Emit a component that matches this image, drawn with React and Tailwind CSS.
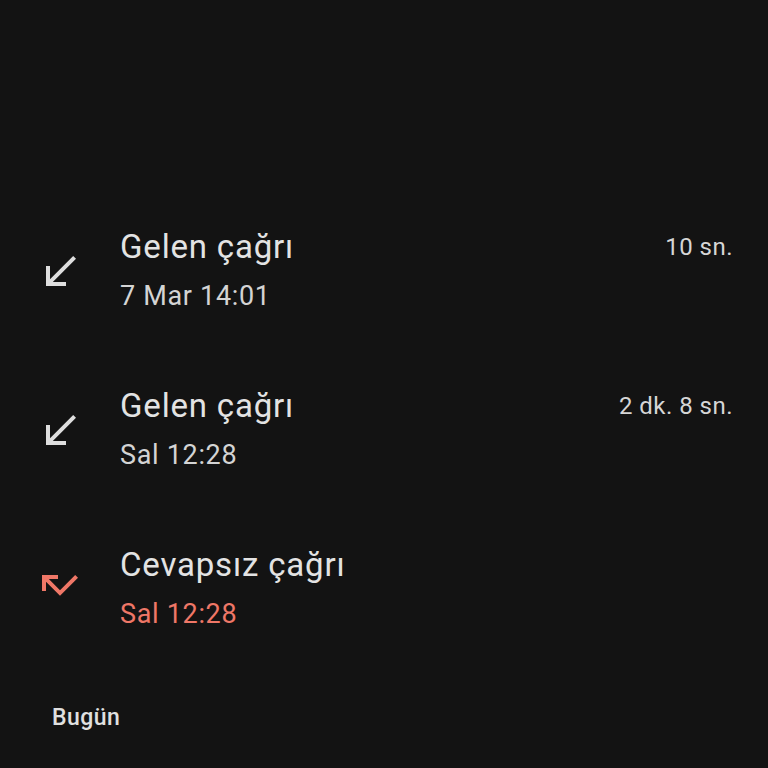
import React from "react";

const IncomingIcon = () => (
  <svg viewBox="0 0 24 24" width="48" height="48" fill="#dedede">
    <path d="M20 5.41L18.59 4 7 15.59V9H5v10h10v-2H8.41z" />
  </svg>
);

const MissedIcon = () => (
  <svg viewBox="0 0 24 24" width="48" height="48" fill="#ef7767">
    <path d="M19.59 7L12 14.59 6.41 9H11V7H3v8h2v-4.59l7 7 9-9z" />
  </svg>
);

const calls = [
  { type: "in", title: "Gelen çağrı", time: "7 Mar 14:01", duration: "10 sn." },
  { type: "in", title: "Gelen çağrı", time: "Sal 12:28", duration: "2 dk. 8 sn." },
  { type: "missed", title: "Cevapsız çağrı", time: "Sal 12:28", duration: null },
];

export default function App() {
  return (
    <div
      className="min-h-screen w-full bg-[#131313] pt-[227px] text-[#e2e2e2]"
      style={{ fontFamily: "Roboto, 'Noto Sans', sans-serif" }}
    >
      <div className="flex flex-col gap-[70px]">
        {calls.map((c, i) => (
          <div key={i} className="flex items-center pr-[35px]">
            <div className="flex w-[120px] items-center pl-[36px]">
              {c.type === "missed" ? (
                <div className="-mt-[10px]">
                  <MissedIcon />
                </div>
              ) : (
                <IncomingIcon />
              )}
            </div>
            <div className="flex flex-1 flex-col gap-[9px]">
              <div className="flex items-center justify-between">
                <span className="text-[33px] leading-[40px] tracking-[0.025em] text-[#e3e3e3]">
                  {c.title}
                </span>
                {c.duration && (
                  <span className="text-[24px] leading-[40px] tracking-[0.02em] text-[#d6d6d6]">
                    {c.duration}
                  </span>
                )}
              </div>
              <span
                className={
                  c.type === "missed"
                    ? "text-[27px] leading-[40px] tracking-[0.025em] text-[#ef7767]"
                    : "text-[27px] leading-[40px] tracking-[0.025em] text-[#d4d4d4]"
                }
              >
                {c.time}
              </span>
            </div>
          </div>
        ))}
      </div>
      <div className="mt-[68px] pl-[52px] text-[23px] font-medium leading-[32px] tracking-[0.02em] text-[#e0e0e0]">
        Bugün
      </div>
    </div>
  );
}
